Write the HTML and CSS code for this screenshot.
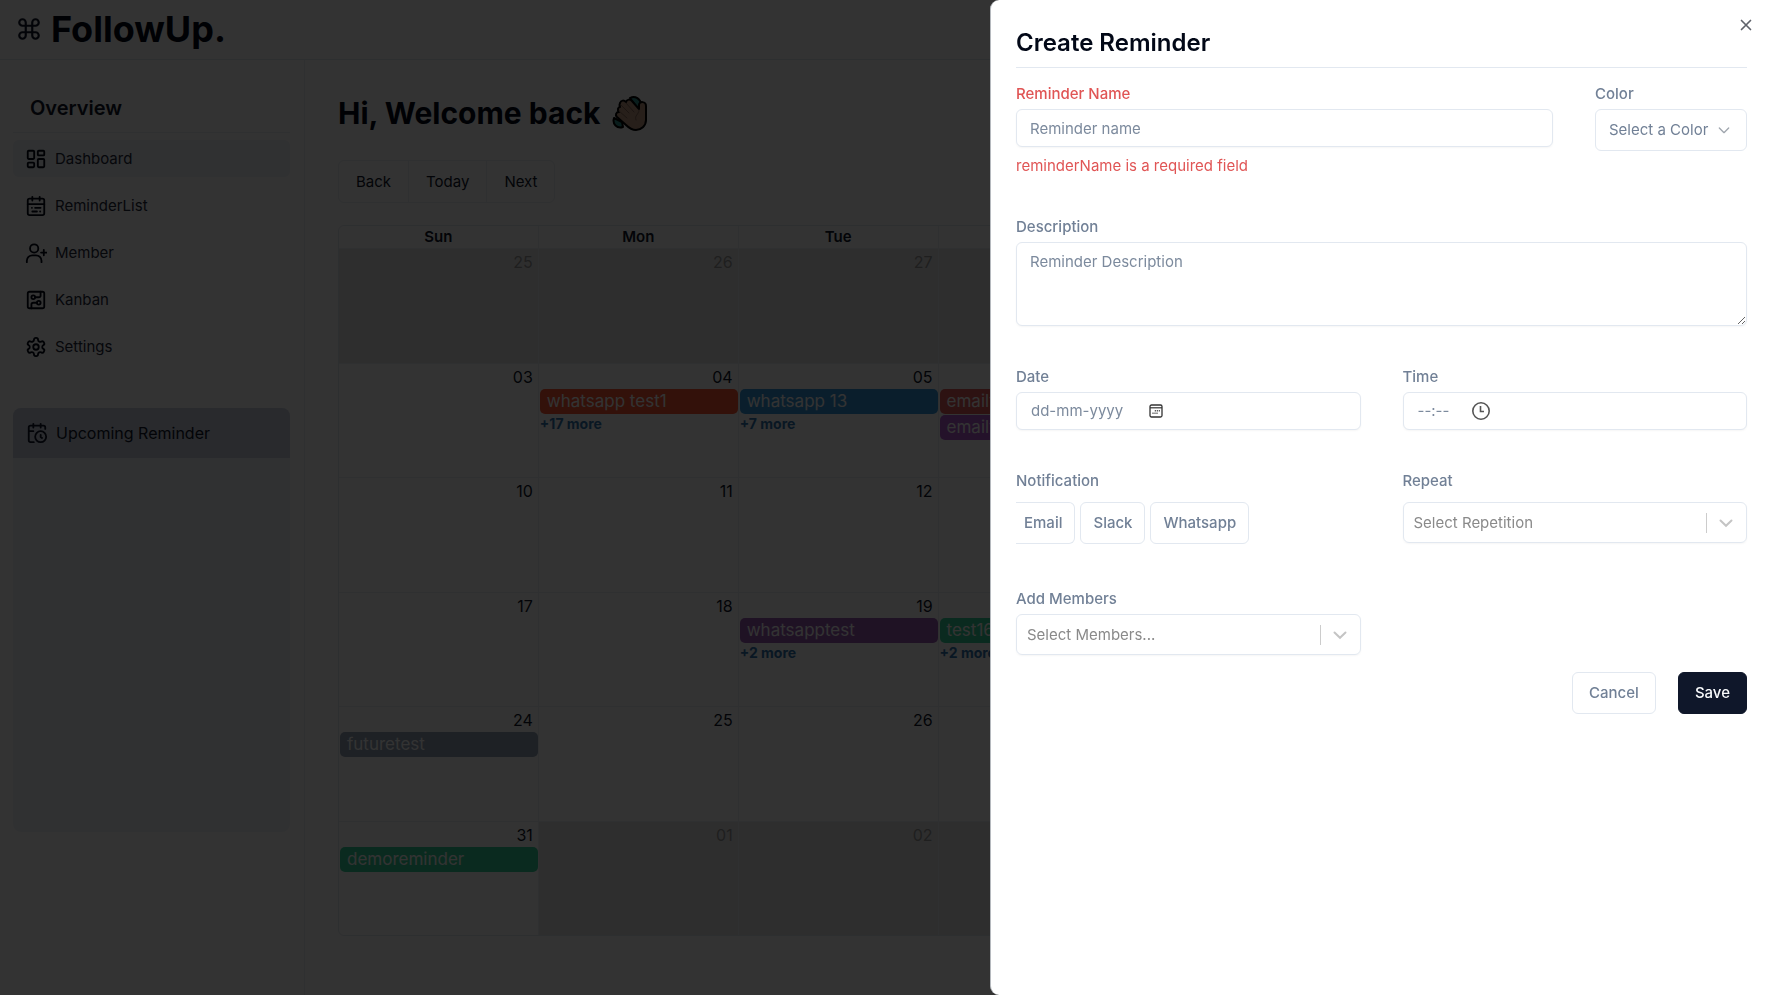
FILE: index.html
```html
<!DOCTYPE html>
<html lang="en">
<head>
<meta charset="utf-8">
<title>FollowUp. – Create Reminder</title>
<meta name="viewport" content="width=device-width, initial-scale=1">
<link rel="stylesheet" href="styles.css">
</head>
<body>
<div class="app">
  <header class="topbar">
    <svg class="icon logo-icon" viewBox="0 0 24 24"><path d="M15 6v12a3 3 0 1 0 3-3H6a3 3 0 1 0 3 3V6a3 3 0 1 0-3 3h12a3 3 0 1 0-3-3"/></svg>
    <span class="brand">FollowUp.</span>
  </header>
  <div class="body">
    <aside class="sidebar">
      <h2 class="side-title">Overview</h2>
      <nav class="nav">
        <a class="nav-item active" href="#dashboard">
          <svg class="icon" viewBox="0 0 24 24"><rect x="3" y="3" width="7" height="9" rx="1"/><rect x="14" y="3" width="7" height="5" rx="1"/><rect x="14" y="12" width="7" height="9" rx="1"/><rect x="3" y="16" width="7" height="5" rx="1"/></svg>
          Dashboard</a>
        <a class="nav-item" href="#reminders">
          <svg class="icon" viewBox="0 0 24 24"><rect x="3" y="4" width="18" height="18" rx="2"/><path d="M8 2v4M16 2v4M3 10h18M7.500 14h.1M11 14h6M8 18h5M16.500 18h.1"/></svg>
          ReminderList</a>
        <a class="nav-item" href="#members">
          <svg class="icon" viewBox="0 0 24 24"><circle cx="10" cy="7" r="4.500"/><path d="M2 22v-1.500a6 6 0 0 1 6-6h4a6 6 0 0 1 6 6V22M20.500 8.500v6M17.500 11.500h6"/></svg>
          Member</a>
        <a class="nav-item" href="#kanban">
          <svg class="icon" viewBox="0 0 24 24"><rect x="3" y="3" width="18" height="18" rx="2"/><path d="M11 9h4a2 2 0 0 0 2-2V3M7 21v-4a2 2 0 0 1 2-2h4"/><circle cx="9" cy="9" r="2"/><circle cx="15" cy="15" r="2"/></svg>
          Kanban</a>
        <a class="nav-item" href="#settings">
          <svg class="icon" viewBox="0 0 24 24"><path d="M12.220 2h-.44a2 2 0 0 0-2 2v.18a2 2 0 0 1-1 1.730l-.43.25a2 2 0 0 1-2 0l-.15-.08a2 2 0 0 0-2.730.730l-.22.380a2 2 0 0 0 .730 2.730l.15.1a2 2 0 0 1 1 1.720v.51a2 2 0 0 1-1 1.740l-.15.09a2 2 0 0 0-.730 2.730l.22.380a2 2 0 0 0 2.730.730l.15-.08a2 2 0 0 1 2 0l.43.25a2 2 0 0 1 1 1.730V20a2 2 0 0 0 2 2h.44a2 2 0 0 0 2-2v-.18a2 2 0 0 1 1-1.730l.43-.25a2 2 0 0 1 2 0l.15.08a2 2 0 0 0 2.730-.730l.22-.390a2 2 0 0 0-.730-2.730l-.15-.08a2 2 0 0 1-1-1.740v-.5a2 2 0 0 1 1-1.740l.15-.09a2 2 0 0 0 .730-2.730l-.22-.380a2 2 0 0 0-2.730-.730l-.15.08a2 2 0 0 1-2 0l-.43-.25a2 2 0 0 1-1-1.730V4a2 2 0 0 0-2-2z"/><circle cx="12" cy="12" r="3"/></svg>
          Settings</a>
      </nav>
      <section class="upcoming">
        <h3 class="upcoming-title">
          <svg class="icon" viewBox="0 0 24 24"><path d="M21 7.500V6a2 2 0 0 0-2-2H5a2 2 0 0 0-2 2v14a2 2 0 0 0 2 2h3.500M16 2v4M8 2v4M3 10h5M17.500 17.500 16 16.300V14"/><circle cx="16" cy="16" r="6"/></svg>
          Upcoming Reminder</h3>
      </section>
    </aside>
    <main class="main">
      <h1 class="welcome">Hi, Welcome back
        <svg class="wave" viewBox="0 0 36 36"><g stroke="#000" stroke-width="2" stroke-linejoin="round" stroke-linecap="round"><path fill="#2f8f8b" d="M18 3c5-3 11 1 11 7l-4 3zM2 23c-2 6 3 11 9 9l-1-5z"/><path fill="#c19a83" d="M8 8c1-3 4-3 6-1 1-3 4-3 6-1l7 8V10c0-4 7-4 7 1v14c0 6-5 10-10 10-4 0-7-2-10-5l-9-8c-2-2-1-5 2-5-2-2-1-5 1-5-1-2 0-4 0-4z"/></g><path fill="none" stroke="#8a6a5a" stroke-width="1" stroke-linecap="round" d="M9 10l8 8M7 16l8 7M14 8l8 9M27 15c0 5-5 5-3 10"/></svg>
      </h1>
      <div class="toolbar">
        <div class="btn-group">
          <button type="button">Back</button><button type="button">Today</button><button type="button">Next</button>
        </div>
        <button type="button" class="month-btn">March 2024</button>
        <span class="toolbar-space"></span>
      </div>
      <section class="calendar">
        <div class="week-head"><span>Sun</span><span>Mon</span><span>Tue</span><span></span><span></span><span></span><span></span></div>
        <div class="days">
          <div class="day off">25</div><div class="day off">26</div><div class="day off">27</div><div class="day off"></div><div class="day off"></div><div class="day"></div><div class="day"></div>
          <div class="day">03</div>
          <div class="day">04<span class="event red">whatsapp test1</span><a class="more" href="#more">+17 more</a></div>
          <div class="day">05<span class="event blue">whatsapp 13</span><a class="more" href="#more">+7 more</a></div>
          <div class="day">06<span class="event rose">emailtest</span><span class="event violet">emailtest</span></div>
          <div class="day"></div><div class="day"></div><div class="day"></div>
          <div class="day">10</div><div class="day">11</div><div class="day">12</div><div class="day"></div><div class="day"></div><div class="day"></div><div class="day"></div>
          <div class="day">17</div><div class="day">18</div>
          <div class="day">19<span class="event purple">whatsapptest</span><a class="more" href="#more">+2 more</a></div>
          <div class="day">20<span class="event green">test16</span><a class="more" href="#more">+2 more</a></div>
          <div class="day"></div><div class="day"></div><div class="day"></div>
          <div class="day">24<span class="event slate">futuretest</span></div><div class="day">25</div><div class="day">26</div><div class="day"></div><div class="day"></div><div class="day"></div><div class="day"></div>
          <div class="day">31<span class="event green">demoreminder</span></div><div class="day off">01</div><div class="day off">02</div><div class="day off"></div><div class="day off"></div><div class="day off"></div><div class="day off"></div>
        </div>
      </section>
    </main>
  </div>
</div>

<div class="overlay"></div>

<div class="sheet" role="dialog" aria-modal="true" aria-labelledby="sheet-title">
  <button type="button" class="close" aria-label="Close"><svg class="icon" viewBox="0 0 16 16"><path d="M4 4l8 8M12 4l-8 8"/></svg></button>
  <h2 class="sheet-title" id="sheet-title">Create Reminder</h2>
  <form class="form" novalidate>
    <div class="row name-row">
      <div class="field">
        <label class="invalid" for="name">Reminder Name</label>
        <input class="control" id="name" type="text" placeholder="Reminder name" aria-describedby="name-error">
        <p class="error" id="name-error">reminderName is a required field</p>
      </div>
      <div class="field">
        <label for="color">Color</label>
        <div class="color-box">
          <select id="color"><option>Select a Color</option></select>
          <svg class="icon" viewBox="0 0 24 24"><path d="m5 9 7 7 7-7"/></svg>
        </div>
      </div>
    </div>
    <div class="field">
      <label for="description">Description</label>
      <textarea class="control area" id="description" placeholder="Reminder Description"></textarea>
    </div>
    <div class="row halves">
      <div class="field">
        <label for="date">Date</label>
        <div class="control picker">
          <input class="date-input" id="date" type="text" placeholder="dd-mm-yyyy">
          <button type="button" aria-label="Pick a date"><svg class="date-icon" viewBox="0 0 14 14"><rect x="1" y="1" width="12" height="12" rx="1.500" fill="none" stroke="#333" stroke-width="1.300"/><path d="M1 3.800h12" stroke="#333" stroke-width="1.200"/><path d="M5.800 6.700h1M7.800 6.700h1M9.800 6.700h1M3.500 9.200h1M5.500 9.200h1M7.500 9.200h1" stroke="#333" stroke-width="1.400"/></svg></button>
        </div>
      </div>
      <div class="field">
        <label for="time">Time</label>
        <div class="control picker">
          <input class="time-input" id="time" type="text" placeholder="--:--">
          <button type="button" aria-label="Pick a time"><svg class="time-icon" viewBox="0 0 20 20"><g fill="none" stroke="#555" stroke-width="1.600"><circle cx="10" cy="10" r="8.200"/><path d="M9.500 5v5.500H13"/></g></svg></button>
        </div>
      </div>
    </div>
    <div class="row halves notify-row">
      <div class="field spaced" role="group" aria-labelledby="notify-label">
        <span class="label" id="notify-label">Notification</span>
        <div class="chips">
          <button type="button" class="chip first">Email</button>
          <button type="button" class="chip">Slack</button>
          <button type="button" class="chip">Whatsapp</button>
        </div>
      </div>
      <div class="field spaced">
        <label for="repeat">Repeat</label>
        <div class="select-box">
          <select id="repeat"><option>Select Repetition</option></select>
          <svg class="chevron" viewBox="0 0 20 20"><path d="M4.500 7.500 10 12.800l5.500-5.300"/></svg>
        </div>
      </div>
    </div>
    <div class="row halves">
      <div class="field">
        <label for="members">Add Members</label>
        <div class="select-box">
          <select id="members"><option>Select Members...</option></select>
          <svg class="chevron" viewBox="0 0 20 20"><path d="M4.500 7.500 10 12.800l5.500-5.300"/></svg>
        </div>
      </div>
    </div>
    <div class="actions">
      <button type="button" class="btn">Cancel</button>
      <button type="submit" class="btn primary">Save</button>
    </div>
  </form>
</div>
</body>
</html>
```

FILE: styles.css
```css
* { box-sizing: border-box; margin: 0; }

body {
  font-family: Inter, "Liberation Sans", sans-serif;
  font-size: 15px;
  line-height: 20px;
  color: #0f172a;
  background: #fff;
  overflow: hidden;
}

button, input, select, textarea { font: inherit; color: inherit; }
button { cursor: pointer; }
a { color: inherit; text-decoration: none; }

.icon {
  width: 22px;
  height: 22px;
  flex: none;
  fill: none;
  stroke: currentColor;
  stroke-width: 2;
  stroke-linecap: round;
  stroke-linejoin: round;
}

/* Application shell */
.app { min-height: 100vh; display: flex; flex-direction: column; }

.topbar {
  display: flex;
  align-items: center;
  gap: 9px;
  height: 60px;
  padding: 0 16px 2px;
  border-bottom: 1px solid #e2e8f0;
}
.logo-icon { width: 26px; height: 26px; }
.brand { font-size: 36px; font-weight: 700; line-height: 40px; color: #020817; }

.body { flex: 1; display: flex; }

.sidebar {
  width: 305px;
  flex: none;
  padding: 33px 14px 33px 13px;
  border-right: 1px solid #e8edf2;
}
.side-title {
  padding: 0 17px 9px;
  border-bottom: 1px solid #e8edf2;
  font-size: 20px;
  font-weight: 600;
  line-height: 30px;
}
.nav { display: flex; flex-direction: column; gap: 10px; padding-top: 7px; }
.nav-item {
  display: flex;
  align-items: center;
  gap: 8px;
  height: 37px;
  padding: 0 12px;
  border-radius: 6px;
  color: #1e293b;
}
.nav-item .icon { color: #020817; }
.nav-item.active { background: #edf2f7; }

.upcoming {
  height: 424px;
  margin-top: 43px;
  border-radius: 8px;
  background: #f1f5f9;
  overflow: hidden;
}
.upcoming-title {
  display: flex;
  align-items: center;
  gap: 8px;
  height: 50px;
  padding: 0 13px;
  background: #cbd1e1;
  font-size: 16px;
  font-weight: 400;
}

.main { flex: 1; min-width: 0; padding: 34px 32px 34px 33px; }
.welcome {
  display: flex;
  align-items: center;
  gap: 12px;
  font-size: 30px;
  font-weight: 700;
  line-height: 38px;
  color: #020817;
}
.wave { width: 36px; height: 38px; }

.toolbar { display: flex; justify-content: space-between; padding: 28px 0 22px; }
.toolbar-space { width: 93px; }
.btn-group { display: flex; border: 1px solid #e8edf2; border-radius: 6px; }
.btn-group button {
  height: 41px;
  padding: 0 17px;
  border: 0;
  background: none;
}
.btn-group button + button { border-left: 1px solid #e8edf2; }
.month-btn {
  height: 43px;
  padding: 0 17px;
  border: 1px solid #e8edf2;
  border-radius: 6px;
  background: none;
}

/* Month calendar */
.calendar { border: 1px solid #e2e8f0; border-radius: 6px; overflow: hidden; }
.week-head, .days { display: grid; grid-template-columns: repeat(7, minmax(0, 1fr)); }
.week-head span {
  height: 22px;
  border-right: 1px solid #e8edf2;
  font-size: 15px;
  font-weight: 600;
  line-height: 22px;
  text-align: center;
}
.days { height: 687px; grid-template-rows: repeat(6, minmax(0, 1fr)); }
.day {
  padding: 1px 5px 0 1px;
  border-top: 1px solid #e8edf2;
  border-right: 1px solid #e8edf2;
  font-size: 16px;
  line-height: 24px;
  text-align: right;
  overflow: hidden;
}
.day.off { background: #e6e6e6; color: #9a9a9a; }
.event {
  display: block;
  height: 25px;
  margin-right: -5px;
  margin-bottom: 1px;
  padding: 0 7px;
  border-radius: 5px;
  color: #fff;
  font-size: 17px;
  line-height: 25px;
  text-align: left;
  white-space: nowrap;
}
.red { background: #ff5733; }
.blue { background: #3498db; }
.rose { background: #e05a5a; }
.violet { background: #b45ad0; }
.purple { background: #9b59b6; }
.green { background: #34d399; }
.slate { background: #94a3b8; }
.more {
  display: block;
  color: #3174ad;
  font-size: 14px;
  font-weight: 700;
  line-height: 18px;
  text-align: left;
}

.overlay { position: fixed; inset: 0; background: rgba(0, 0, 0, 0.8); }

/* Slide-in sheet */
.sheet {
  position: fixed;
  inset: 0 0 0 auto;
  width: 44.1%;
  padding: 26px 24px 24px 25px;
  border-left: 1px solid #b5b9be;
  border-radius: 9px 0 0 9px;
  background: #fff;
  overflow: auto;
}
.close {
  position: absolute;
  top: 16px;
  right: 16px;
  display: flex;
  padding: 0;
  border: 0;
  background: none;
  color: #5f636b;
}
.close .icon { width: 18px; height: 18px; stroke-width: 1.500; }
.sheet-title {
  padding-bottom: 7px;
  border-bottom: 1px solid #e2e8f0;
  font-size: 24px;
  font-weight: 600;
  line-height: 34px;
  color: #020817;
}

.form {
  display: flex;
  flex-direction: column;
  gap: 41px;
  padding-top: 16px;
  color: #718096;
}
.row { display: grid; }
.name-row { grid-template-columns: minmax(0, 1fr) auto; column-gap: 42px; }
.halves { grid-template-columns: repeat(2, minmax(0, 1fr)); column-gap: 42px; }
.notify-row { padding-bottom: 4px; }
.field { display: flex; flex-direction: column; gap: 5px; }
.field.spaced { gap: 11px; }
label, .label { font-weight: 500; }
.invalid, .error { color: #e05555; }
.error { padding-top: 4px; }

.control {
  width: 100%;
  height: 38px;
  padding: 0 13px;
  border: 1px solid #e2e8f0;
  border-radius: 6px;
  background: #fff;
  box-shadow: 0 1px 2px rgba(0, 0, 0, 0.04);
}
::placeholder { color: #7c8a9d; opacity: 1; }
.area { display: block; height: 84px; padding: 9px 13px; resize: vertical; }

.color-box {
  display: flex;
  align-items: center;
  gap: 7px;
  height: 42px;
  padding: 0 14px 0 13px;
  border: 1px solid #e2e8f0;
  border-radius: 6px;
}
.color-box .icon { width: 16px; height: 16px; color: #a0a6ae; }
select {
  appearance: none;
  padding: 0;
  border: 0;
  background: none;
}

.picker { display: flex; align-items: center; padding: 0 14px; }
.picker input { padding: 0; border: 0; background: none; }
.picker button { display: flex; padding: 0; border: 0; background: none; }
.date-input { width: 118px; }
.time-input { width: 53px; }
.date-icon { width: 14px; height: 14px; }
.time-icon { width: 20px; height: 20px; }

.chips { display: flex; gap: 5px; }
.chip, .btn {
  height: 42px;
  border: 1px solid #e2e8f0;
  border-radius: 6px;
  background: #fff;
  font-weight: 500;
}
.chip { padding: 0 12px; }
.chip.first { padding-left: 8px; border-left: 0; border-radius: 0 6px 6px 0; }

.select-box {
  display: flex;
  align-items: center;
  height: 41px;
  padding: 0 10px;
  border: 1px solid #e2e8f0;
  border-radius: 6px;
  box-shadow: 0 1px 2px rgba(0, 0, 0, 0.04);
  color: #8a8a8a;
}
.select-box select { flex: 1; }
.chevron {
  box-sizing: content-box;
  width: 20px;
  height: 20px;
  padding-left: 9px;
  border-left: 1px solid #ccc;
  fill: none;
  stroke: #c4c4c4;
  stroke-width: 2;
  stroke-linecap: round;
}

.actions { display: flex; justify-content: flex-end; gap: 22px; margin-top: -24px; }
.btn { padding: 0 16px; }
.btn.primary { border-color: #0f172a; background: #0f172a; color: #f8fafc; }
```
